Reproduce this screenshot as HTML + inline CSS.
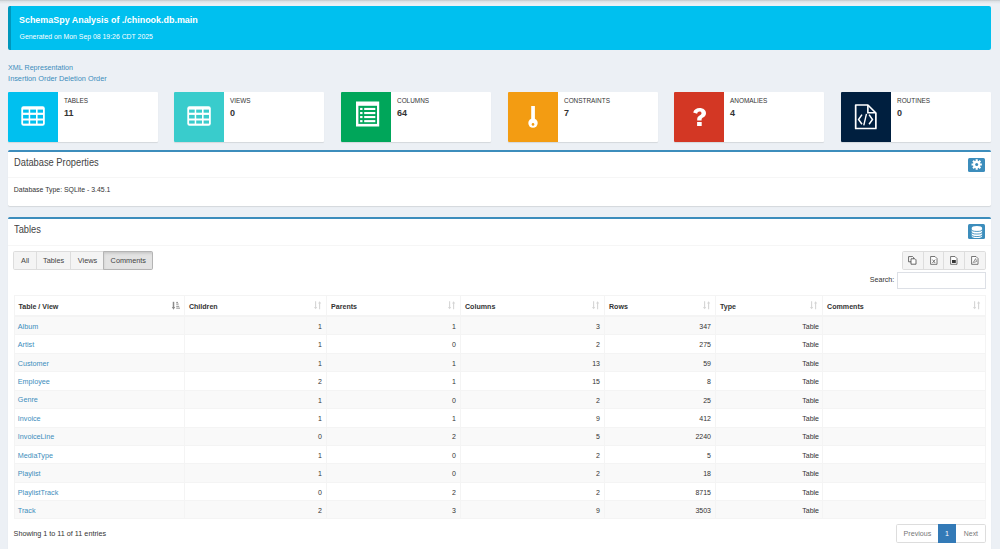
<!DOCTYPE html>
<html><head><meta charset="utf-8"><title>SchemaSpy</title>
<style>
html,body{margin:0;padding:0;width:1000px;height:549px;overflow:hidden;background:#ecf0f5;font-family:"Liberation Sans",sans-serif;}
.t{position:absolute;white-space:nowrap;}
</style></head><body>
<div style="position:absolute;left:0;top:0;width:1000px;height:4px;background:linear-gradient(#c2c6ca,#dde1e5 35%,#ecf0f5)"></div>
<div style="position:absolute;left:8px;top:6px;width:980px;height:44px;background:#00c0ef;border-left:3px solid #0097bc;border-radius:2px"></div>
<div class="t" style="left:19.20px;top:10.45px;font-size:9.655px;line-height:20px;color:#fff;font-weight:bold;transform:scaleX(0.9259);transform-origin:left center;">SchemaSpy Analysis of ./chinook.db.main</div>
<div class="t" style="left:19.60px;top:26.62px;font-size:6.88px;line-height:20px;color:#fff;font-weight:normal;">Generated on Mon Sep 08 19:26 CDT 2025</div>
<div class="t" style="left:8.10px;top:58.32px;font-size:7.15px;line-height:20px;color:#3c8dbc;font-weight:normal;">XML Representation</div>
<div class="t" style="left:8.10px;top:69.26px;font-size:7.34px;line-height:20px;color:#3c8dbc;font-weight:normal;">Insertion Order Deletion Order</div>
<div style="position:absolute;left:8.00px;top:92px;width:150px;height:50px;background:#fff;border-radius:1px;box-shadow:0 1px 1px rgba(0,0,0,0.1)"><div style="position:absolute;left:0;top:0;width:50px;height:50px;background:#00c0ef;border-radius:1px 0 0 1px"><svg style="position:absolute;left:13.3px;top:14.3px" width="25" height="21"><rect x="0.3" y="0.3" width="23.5" height="19.4" rx="2.2" fill="#fff"/><rect x="2.1" y="3.6" width="5.6" height="3.1" fill="#00c0ef"/><rect x="2.1" y="8.9" width="5.6" height="3.6" fill="#00c0ef"/><rect x="2.1" y="14.5" width="5.6" height="3.1" fill="#00c0ef"/><rect x="9.2" y="3.6" width="5.8" height="3.1" fill="#00c0ef"/><rect x="9.2" y="8.9" width="5.8" height="3.6" fill="#00c0ef"/><rect x="9.2" y="14.5" width="5.8" height="3.1" fill="#00c0ef"/><rect x="16.6" y="3.6" width="5.4" height="3.1" fill="#00c0ef"/><rect x="16.6" y="8.9" width="5.4" height="3.6" fill="#00c0ef"/><rect x="16.6" y="14.5" width="5.4" height="3.1" fill="#00c0ef"/></svg></div></div>
<div class="t" style="left:64.00px;top:90.58px;font-size:6.42px;line-height:20px;color:#333;font-weight:normal;">TABLES</div>
<div class="t" style="left:64.00px;top:103.18px;font-size:9.0px;line-height:20px;color:#333;font-weight:bold;">11</div>
<div style="position:absolute;left:174.00px;top:92px;width:150px;height:50px;background:#fff;border-radius:1px;box-shadow:0 1px 1px rgba(0,0,0,0.1)"><div style="position:absolute;left:0;top:0;width:50px;height:50px;background:#39cccc;border-radius:1px 0 0 1px"><svg style="position:absolute;left:13.3px;top:14.3px" width="25" height="21"><rect x="0.3" y="0.3" width="23.5" height="19.4" rx="2.2" fill="#fff"/><rect x="2.1" y="3.6" width="5.6" height="3.1" fill="#39cccc"/><rect x="2.1" y="8.9" width="5.6" height="3.6" fill="#39cccc"/><rect x="2.1" y="14.5" width="5.6" height="3.1" fill="#39cccc"/><rect x="9.2" y="3.6" width="5.8" height="3.1" fill="#39cccc"/><rect x="9.2" y="8.9" width="5.8" height="3.6" fill="#39cccc"/><rect x="9.2" y="14.5" width="5.8" height="3.1" fill="#39cccc"/><rect x="16.6" y="3.6" width="5.4" height="3.1" fill="#39cccc"/><rect x="16.6" y="8.9" width="5.4" height="3.6" fill="#39cccc"/><rect x="16.6" y="14.5" width="5.4" height="3.1" fill="#39cccc"/></svg></div></div>
<div class="t" style="left:230.00px;top:90.58px;font-size:6.42px;line-height:20px;color:#333;font-weight:normal;">VIEWS</div>
<div class="t" style="left:230.00px;top:103.18px;font-size:9.0px;line-height:20px;color:#333;font-weight:bold;">0</div>
<div style="position:absolute;left:341.00px;top:92px;width:150px;height:50px;background:#fff;border-radius:1px;box-shadow:0 1px 1px rgba(0,0,0,0.1)"><div style="position:absolute;left:0;top:0;width:50px;height:50px;background:#00a65a;border-radius:1px 0 0 1px"><svg style="position:absolute;left:14px;top:9px" width="26" height="27"><g transform="translate(0.7,0.5)"><rect x="0.3" y="0" width="23.2" height="25" fill="#fff"/><rect x="2.7" y="4.3" width="18.6" height="18.1" fill="#00a65a"/><rect x="4.4" y="6.4" width="2.4" height="2.1" fill="#fff"/><rect x="8.5" y="6.4" width="11.1" height="2.1" fill="#fff"/><rect x="4.4" y="10.5" width="2.4" height="2.1" fill="#fff"/><rect x="8.5" y="10.5" width="11.1" height="2.1" fill="#fff"/><rect x="4.4" y="14.5" width="2.4" height="2.1" fill="#fff"/><rect x="8.5" y="14.5" width="11.1" height="2.1" fill="#fff"/><rect x="4.4" y="18.6" width="2.4" height="2.1" fill="#fff"/><rect x="8.5" y="18.6" width="11.1" height="2.1" fill="#fff"/></g></svg></div></div>
<div class="t" style="left:397.00px;top:90.58px;font-size:6.42px;line-height:20px;color:#333;font-weight:normal;">COLUMNS</div>
<div class="t" style="left:397.00px;top:103.18px;font-size:9.0px;line-height:20px;color:#333;font-weight:bold;">64</div>
<div style="position:absolute;left:508.00px;top:92px;width:150px;height:50px;background:#fff;border-radius:1px;box-shadow:0 1px 1px rgba(0,0,0,0.1)"><div style="position:absolute;left:0;top:0;width:50px;height:50px;background:#f39c12;border-radius:1px 0 0 1px"><svg style="position:absolute;left:19.6px;top:14px" width="11" height="23"><rect x="3.2" y="0" width="3.7" height="15" fill="#fff"/><circle cx="5" cy="17.1" r="4.7" fill="#fff"/><circle cx="5" cy="18.4" r="1.3" fill="#f39c12"/></svg></div></div>
<div class="t" style="left:564.00px;top:90.58px;font-size:6.42px;line-height:20px;color:#333;font-weight:normal;">CONSTRAINTS</div>
<div class="t" style="left:564.00px;top:103.18px;font-size:9.0px;line-height:20px;color:#333;font-weight:bold;">7</div>
<div style="position:absolute;left:674.00px;top:92px;width:150px;height:50px;background:#fff;border-radius:1px;box-shadow:0 1px 1px rgba(0,0,0,0.1)"><div style="position:absolute;left:0;top:0;width:50px;height:50px;background:#d33724;border-radius:1px 0 0 1px"><svg style="position:absolute;left:19.2px;top:15.9px" width="15" height="19"><path d="M0.2 4.6 C0.9 1.5 3.5 0 6.6 0 C10.3 0 13 2.1 13 5.2 C13 7.6 11.5 8.7 10 9.6 C9 10.2 8.6 10.7 8.6 11.7 L8.6 12.6 L4.2 12.6 L4.2 11.2 C4.2 9.3 5.1 8.3 6.6 7.4 C7.7 6.7 8.5 6.2 8.5 5.2 C8.5 4.1 7.7 3.5 6.6 3.5 C5.3 3.5 4.5 4.3 4.1 5.7 Z" fill="#fff"/><rect x="4.1" y="14" width="4.6" height="4" fill="#fff"/></svg></div></div>
<div class="t" style="left:730.00px;top:90.58px;font-size:6.42px;line-height:20px;color:#333;font-weight:normal;">ANOMALIES</div>
<div class="t" style="left:730.00px;top:103.18px;font-size:9.0px;line-height:20px;color:#333;font-weight:bold;">4</div>
<div style="position:absolute;left:841.00px;top:92px;width:150px;height:50px;background:#fff;border-radius:1px;box-shadow:0 1px 1px rgba(0,0,0,0.1)"><div style="position:absolute;left:0;top:0;width:50px;height:50px;background:#001f3f;border-radius:1px 0 0 1px"><svg style="position:absolute;left:0;top:0" width="50" height="50"><g transform="translate(-841.33,-92)"><path d="M856 105 H868.2 L876.2 113 V128.5 H856 Z" fill="none" stroke="#fff" stroke-width="1.7" stroke-linejoin="round"/><path d="M868.2 105 V112.8 H876.2" fill="none" stroke="#fff" stroke-width="1.6"/><path d="M862.3 114.6 L858.9 119.5 L862.3 124.2" fill="none" stroke="#fff" stroke-width="1.5"/><path d="M869.4 114.6 L872.8 119.5 L869.4 124.2" fill="none" stroke="#fff" stroke-width="1.5"/><path d="M866.8 113.8 L864.1 125.4" fill="none" stroke="#fff" stroke-width="1.4"/></g></svg></div></div>
<div class="t" style="left:897.00px;top:90.58px;font-size:6.42px;line-height:20px;color:#333;font-weight:normal;">ROUTINES</div>
<div class="t" style="left:897.00px;top:103.18px;font-size:9.0px;line-height:20px;color:#333;font-weight:bold;">0</div>
<div style="position:absolute;left:8px;top:150.3px;width:983px;height:55.7px;background:#fff;border-top:2px solid #3c8dbc;box-sizing:border-box;border-radius:1.7px;box-shadow:0 1px 1px rgba(0,0,0,0.1)"></div>
<div class="t" style="left:14.20px;top:153.06px;font-size:10.23px;line-height:20px;color:#444;font-weight:normal;transform:scaleX(0.9091);transform-origin:left center;">Database Properties</div>
<div style="position:absolute;left:968px;top:157.8px;width:17px;height:14.2px;background:#3c8dbc;border-radius:1.5px"></div>
<svg style="position:absolute;left:0;top:0" width="1000" height="549"><polygon points="975.29,161.08 975.59,160.92 975.66,159.35 977.74,159.35 977.81,160.92 978.11,161.08 978.13,161.09 978.45,161.18 979.60,160.12 981.08,161.60 980.02,162.75 980.11,163.07 980.12,163.09 980.28,163.39 981.85,163.46 981.85,165.54 980.28,165.61 980.12,165.91 980.11,165.93 980.02,166.25 981.08,167.40 979.60,168.88 978.45,167.82 978.13,167.91 978.11,167.92 977.81,168.08 977.74,169.65 975.66,169.65 975.59,168.08 975.29,167.92 975.27,167.91 974.95,167.82 973.80,168.88 972.32,167.40 973.38,166.25 973.29,165.93 973.28,165.91 973.12,165.61 971.55,165.54 971.55,163.46 973.12,163.39 973.28,163.09 973.29,163.07 973.38,162.75 972.32,161.60 973.80,160.12 974.95,161.18 975.27,161.09" fill="#fff"/><circle cx="976.7" cy="164.5" r="1.5" fill="#3c8dbc"/></svg>
<div style="position:absolute;left:8px;top:177px;width:983px;height:0.6px;background:#f6f6f6"></div>
<div class="t" style="left:13.80px;top:179.60px;font-size:6.92px;line-height:20px;color:#333;font-weight:normal;">Database Type: SQLite - 3.45.1</div>
<div style="position:absolute;left:8px;top:217px;width:983px;height:400px;background:#fff;border-top:2px solid #3c8dbc;box-sizing:border-box;border-radius:1.7px;box-shadow:0 1px 1px rgba(0,0,0,0.1)"></div>
<div class="t" style="left:14.20px;top:220.06px;font-size:10.23px;line-height:20px;color:#444;font-weight:normal;transform:scaleX(0.9091);transform-origin:left center;">Tables</div>
<div style="position:absolute;left:968px;top:224.3px;width:17px;height:14.9px;background:#3c8dbc;border-radius:1.5px"></div>
<svg style="position:absolute;left:0;top:0" width="1000" height="549"><path d="M971.7 228 A5.2 2.1 0 0 1 982.1 228 V236 A5.2 2.1 0 0 1 971.7 236 Z" fill="#fff"/><path d="M971.5 229.4 A5.3 2.0 0 0 0 982.3 229.4" fill="none" stroke="#3c8dbc" stroke-width="0.9"/><path d="M971.5 232.0 A5.3 2.0 0 0 0 982.3 232.0" fill="none" stroke="#3c8dbc" stroke-width="0.9"/><path d="M971.5 234.5 A5.3 2.0 0 0 0 982.3 234.5" fill="none" stroke="#3c8dbc" stroke-width="0.9"/></svg>
<div style="position:absolute;left:8px;top:245px;width:983px;height:0.6px;background:#f6f6f6"></div>
<div style="position:absolute;left:13.3px;top:251.2px;width:139.7px;height:18.8px;box-sizing:border-box;border:0.6px solid #ddd;border-radius:1.7px;background:#f4f4f4;overflow:hidden"><div style="position:absolute;left:90.1px;top:0;width:50px;height:100%;background:#e3e3e3;box-shadow:inset 0 1.5px 2.5px rgba(0,0,0,0.13)"></div></div>
<div style="position:absolute;left:36.20px;top:251.2px;width:0.6px;height:18.8px;background:#ddd"></div>
<div style="position:absolute;left:70.30px;top:251.2px;width:0.6px;height:18.8px;background:#ddd"></div>
<div style="position:absolute;left:103.10px;top:251.2px;width:0.6px;height:18.8px;background:#ddd"></div>
<div style="position:absolute;left:103.1px;top:251.2px;width:49.9px;height:18.8px;box-sizing:border-box;border:0.8px solid #b4b4b4;border-radius:0 1.7px 1.7px 0"></div>
<div class="t" style="left:21.00px;top:251.16px;font-size:7.33px;line-height:20px;color:#444;font-weight:normal;">All</div>
<div class="t" style="left:43.00px;top:251.16px;font-size:7.33px;line-height:20px;color:#444;font-weight:normal;">Tables</div>
<div class="t" style="left:77.80px;top:251.16px;font-size:7.33px;line-height:20px;color:#444;font-weight:normal;">Views</div>
<div class="t" style="left:110.60px;top:251.16px;font-size:7.33px;line-height:20px;color:#444;font-weight:normal;">Comments</div>
<div style="position:absolute;left:901.6px;top:251.4px;width:84px;height:18.4px;box-sizing:border-box;border:0.6px solid #ddd;border-radius:1.7px;background:#f4f4f4"></div>
<div style="position:absolute;left:923.20px;top:251.4px;width:0.6px;height:18.4px;background:#ddd"></div>
<div style="position:absolute;left:943.30px;top:251.4px;width:0.6px;height:18.4px;background:#ddd"></div>
<div style="position:absolute;left:964.20px;top:251.4px;width:0.6px;height:18.4px;background:#ddd"></div>
<svg style="position:absolute;left:908.20px;top:256.4px" width="9" height="9"><path d="M0.6 0.6 H4.6 L5.6 1.6 V5.8 H0.6 Z" fill="#fff" stroke="#444" stroke-width="0.8"/><path d="M3 2.8 H7 L8 3.8 V8.2 H3 Z" fill="#fff" stroke="#444" stroke-width="0.8"/></svg>
<svg style="position:absolute;left:929.60px;top:256.4px" width="9" height="9"><path d="M0.6 0.5 H5 L7 2.5 V8.3 H0.6 Z" fill="#fff" stroke="#555" stroke-width="0.8"/><path d="M2.4 3.6 L5.2 7 M5.2 3.6 L2.4 7" stroke="#555" stroke-width="0.8"/></svg>
<svg style="position:absolute;left:950.40px;top:256.4px" width="9" height="9"><path d="M0.6 0.5 H5 L7 2.5 V8.3 H0.6 Z" fill="#fff" stroke="#555" stroke-width="0.8"/><rect x="2" y="4" width="3.8" height="3" fill="#333"/></svg>
<svg style="position:absolute;left:970.80px;top:256.4px" width="9" height="9"><path d="M0.6 0.5 H5 L7 2.5 V8.3 H0.6 Z" fill="#fff" stroke="#555" stroke-width="0.8"/><path d="M1.8 7.2 L4.6 2.6 L5.6 5.6 L2.8 6.4" fill="none" stroke="#666" stroke-width="0.7"/></svg>
<div class="t" style="right:105.80px;top:269.55px;font-size:7.08px;line-height:20px;color:#333;font-weight:normal;">Search:</div>
<div style="position:absolute;left:897.3px;top:272.2px;width:88.3px;height:16.8px;box-sizing:border-box;border:0.7px solid #dde0e6;background:#fff"></div>
<div style="position:absolute;left:13.8px;top:316.00px;width:971.8px;height:18.44px;background:#f9f9f9;border-top:0.6px solid #f4f4f4;box-sizing:border-box"></div>
<div style="position:absolute;left:13.8px;top:334.44px;width:971.8px;height:18.44px;background:#fff;border-top:0.6px solid #f4f4f4;box-sizing:border-box"></div>
<div style="position:absolute;left:13.8px;top:352.87px;width:971.8px;height:18.44px;background:#f9f9f9;border-top:0.6px solid #f4f4f4;box-sizing:border-box"></div>
<div style="position:absolute;left:13.8px;top:371.31px;width:971.8px;height:18.44px;background:#fff;border-top:0.6px solid #f4f4f4;box-sizing:border-box"></div>
<div style="position:absolute;left:13.8px;top:389.74px;width:971.8px;height:18.44px;background:#f9f9f9;border-top:0.6px solid #f4f4f4;box-sizing:border-box"></div>
<div style="position:absolute;left:13.8px;top:408.18px;width:971.8px;height:18.44px;background:#fff;border-top:0.6px solid #f4f4f4;box-sizing:border-box"></div>
<div style="position:absolute;left:13.8px;top:426.62px;width:971.8px;height:18.44px;background:#f9f9f9;border-top:0.6px solid #f4f4f4;box-sizing:border-box"></div>
<div style="position:absolute;left:13.8px;top:445.05px;width:971.8px;height:18.44px;background:#fff;border-top:0.6px solid #f4f4f4;box-sizing:border-box"></div>
<div style="position:absolute;left:13.8px;top:463.49px;width:971.8px;height:18.44px;background:#f9f9f9;border-top:0.6px solid #f4f4f4;box-sizing:border-box"></div>
<div style="position:absolute;left:13.8px;top:481.92px;width:971.8px;height:18.44px;background:#fff;border-top:0.6px solid #f4f4f4;box-sizing:border-box"></div>
<div style="position:absolute;left:13.8px;top:500.36px;width:971.8px;height:18.44px;background:#f9f9f9;border-top:0.6px solid #f4f4f4;box-sizing:border-box"></div>
<div style="position:absolute;left:13.8px;top:295.3px;width:971.8px;height:223.50px;box-sizing:border-box;border:0.6px solid #f4f4f4"></div>
<div style="position:absolute;left:13.8px;top:314.90px;width:971.8px;height:1.1px;background:#f4f4f4"></div>
<div style="position:absolute;left:184.00px;top:295.3px;width:0.6px;height:223.50px;background:#f4f4f4"></div>
<div style="position:absolute;left:326.10px;top:295.3px;width:0.6px;height:223.50px;background:#f4f4f4"></div>
<div style="position:absolute;left:460.10px;top:295.3px;width:0.6px;height:223.50px;background:#f4f4f4"></div>
<div style="position:absolute;left:604.10px;top:295.3px;width:0.6px;height:223.50px;background:#f4f4f4"></div>
<div style="position:absolute;left:715.10px;top:295.3px;width:0.6px;height:223.50px;background:#f4f4f4"></div>
<div style="position:absolute;left:822.20px;top:295.3px;width:0.6px;height:223.50px;background:#f4f4f4"></div>
<div class="t" style="left:18.40px;top:296.74px;font-size:7.1px;line-height:20px;color:#333;font-weight:bold;">Table / View</div>
<div class="t" style="left:188.90px;top:296.74px;font-size:7.1px;line-height:20px;color:#333;font-weight:bold;">Children</div>
<div class="t" style="left:331.00px;top:296.74px;font-size:7.1px;line-height:20px;color:#333;font-weight:bold;">Parents</div>
<div class="t" style="left:465.00px;top:296.74px;font-size:7.1px;line-height:20px;color:#333;font-weight:bold;">Columns</div>
<div class="t" style="left:609.00px;top:296.74px;font-size:7.1px;line-height:20px;color:#333;font-weight:bold;">Rows</div>
<div class="t" style="left:720.00px;top:296.74px;font-size:7.1px;line-height:20px;color:#333;font-weight:bold;">Type</div>
<div class="t" style="left:827.10px;top:296.74px;font-size:7.1px;line-height:20px;color:#333;font-weight:bold;">Comments</div>
<svg style="position:absolute;left:314.10px;top:301.2px" width="8" height="9"><path d="M1.6 0.3 V7.2" stroke="#d5d5d5" stroke-width="1.1"/><path d="M0 6 L1.6 8.2 L3.2 6 Z" fill="#d5d5d5"/><path d="M5.6 1.8 V8.3" stroke="#d5d5d5" stroke-width="1.1"/><path d="M4 2.4 L5.6 0.2 L7.2 2.4 Z" fill="#d5d5d5"/></svg>
<svg style="position:absolute;left:448.10px;top:301.2px" width="8" height="9"><path d="M1.6 0.3 V7.2" stroke="#d5d5d5" stroke-width="1.1"/><path d="M0 6 L1.6 8.2 L3.2 6 Z" fill="#d5d5d5"/><path d="M5.6 1.8 V8.3" stroke="#d5d5d5" stroke-width="1.1"/><path d="M4 2.4 L5.6 0.2 L7.2 2.4 Z" fill="#d5d5d5"/></svg>
<svg style="position:absolute;left:592.10px;top:301.2px" width="8" height="9"><path d="M1.6 0.3 V7.2" stroke="#d5d5d5" stroke-width="1.1"/><path d="M0 6 L1.6 8.2 L3.2 6 Z" fill="#d5d5d5"/><path d="M5.6 1.8 V8.3" stroke="#d5d5d5" stroke-width="1.1"/><path d="M4 2.4 L5.6 0.2 L7.2 2.4 Z" fill="#d5d5d5"/></svg>
<svg style="position:absolute;left:703.10px;top:301.2px" width="8" height="9"><path d="M1.6 0.3 V7.2" stroke="#d5d5d5" stroke-width="1.1"/><path d="M0 6 L1.6 8.2 L3.2 6 Z" fill="#d5d5d5"/><path d="M5.6 1.8 V8.3" stroke="#d5d5d5" stroke-width="1.1"/><path d="M4 2.4 L5.6 0.2 L7.2 2.4 Z" fill="#d5d5d5"/></svg>
<svg style="position:absolute;left:810.20px;top:301.2px" width="8" height="9"><path d="M1.6 0.3 V7.2" stroke="#d5d5d5" stroke-width="1.1"/><path d="M0 6 L1.6 8.2 L3.2 6 Z" fill="#d5d5d5"/><path d="M5.6 1.8 V8.3" stroke="#d5d5d5" stroke-width="1.1"/><path d="M4 2.4 L5.6 0.2 L7.2 2.4 Z" fill="#d5d5d5"/></svg>
<svg style="position:absolute;left:973.30px;top:301.2px" width="8" height="9"><path d="M1.6 0.3 V7.2" stroke="#d5d5d5" stroke-width="1.1"/><path d="M0 6 L1.6 8.2 L3.2 6 Z" fill="#d5d5d5"/><path d="M5.6 1.8 V8.3" stroke="#d5d5d5" stroke-width="1.1"/><path d="M4 2.4 L5.6 0.2 L7.2 2.4 Z" fill="#d5d5d5"/></svg>
<svg style="position:absolute;left:0;top:0" width="1000" height="549"><path d="M173.5 301.8 V308" stroke="#8a8a8a" stroke-width="1.5"/><path d="M171.8 307 L173.5 309.8 L175.2 307 Z" fill="#8a8a8a"/><rect x="176.2" y="301.9" width="1.8" height="1.1" fill="#999"/><rect x="176.2" y="303.5" width="2.4" height="1.2" fill="#999"/><rect x="176.2" y="305.8" width="3.0" height="1.1" fill="#999"/><rect x="176.2" y="307.6" width="3.8" height="1.1" fill="#999"/></svg>
<div class="t" style="left:17.80px;top:316.72px;font-size:7.2px;line-height:20px;color:#3c8dbc;font-weight:normal;">Album</div>
<div class="t" style="right:678.00px;top:316.79px;font-size:7.0px;line-height:20px;color:#333;font-weight:normal;">1</div>
<div class="t" style="right:544.00px;top:316.79px;font-size:7.0px;line-height:20px;color:#333;font-weight:normal;">1</div>
<div class="t" style="right:400.00px;top:316.79px;font-size:7.0px;line-height:20px;color:#333;font-weight:normal;">3</div>
<div class="t" style="right:289.00px;top:316.79px;font-size:7.0px;line-height:20px;color:#333;font-weight:normal;">347</div>
<div class="t" style="right:181.00px;top:316.79px;font-size:7.0px;line-height:20px;color:#333;font-weight:normal;">Table</div>
<div class="t" style="left:17.80px;top:335.16px;font-size:7.2px;line-height:20px;color:#3c8dbc;font-weight:normal;">Artist</div>
<div class="t" style="right:678.00px;top:335.23px;font-size:7.0px;line-height:20px;color:#333;font-weight:normal;">1</div>
<div class="t" style="right:544.00px;top:335.23px;font-size:7.0px;line-height:20px;color:#333;font-weight:normal;">0</div>
<div class="t" style="right:400.00px;top:335.23px;font-size:7.0px;line-height:20px;color:#333;font-weight:normal;">2</div>
<div class="t" style="right:289.00px;top:335.23px;font-size:7.0px;line-height:20px;color:#333;font-weight:normal;">275</div>
<div class="t" style="right:181.00px;top:335.23px;font-size:7.0px;line-height:20px;color:#333;font-weight:normal;">Table</div>
<div class="t" style="left:17.80px;top:353.60px;font-size:7.2px;line-height:20px;color:#3c8dbc;font-weight:normal;">Customer</div>
<div class="t" style="right:678.00px;top:353.66px;font-size:7.0px;line-height:20px;color:#333;font-weight:normal;">1</div>
<div class="t" style="right:544.00px;top:353.66px;font-size:7.0px;line-height:20px;color:#333;font-weight:normal;">1</div>
<div class="t" style="right:400.00px;top:353.66px;font-size:7.0px;line-height:20px;color:#333;font-weight:normal;">13</div>
<div class="t" style="right:289.00px;top:353.66px;font-size:7.0px;line-height:20px;color:#333;font-weight:normal;">59</div>
<div class="t" style="right:181.00px;top:353.66px;font-size:7.0px;line-height:20px;color:#333;font-weight:normal;">Table</div>
<div class="t" style="left:17.80px;top:372.03px;font-size:7.2px;line-height:20px;color:#3c8dbc;font-weight:normal;">Employee</div>
<div class="t" style="right:678.00px;top:372.10px;font-size:7.0px;line-height:20px;color:#333;font-weight:normal;">2</div>
<div class="t" style="right:544.00px;top:372.10px;font-size:7.0px;line-height:20px;color:#333;font-weight:normal;">1</div>
<div class="t" style="right:400.00px;top:372.10px;font-size:7.0px;line-height:20px;color:#333;font-weight:normal;">15</div>
<div class="t" style="right:289.00px;top:372.10px;font-size:7.0px;line-height:20px;color:#333;font-weight:normal;">8</div>
<div class="t" style="right:181.00px;top:372.10px;font-size:7.0px;line-height:20px;color:#333;font-weight:normal;">Table</div>
<div class="t" style="left:17.80px;top:390.47px;font-size:7.2px;line-height:20px;color:#3c8dbc;font-weight:normal;">Genre</div>
<div class="t" style="right:678.00px;top:390.54px;font-size:7.0px;line-height:20px;color:#333;font-weight:normal;">1</div>
<div class="t" style="right:544.00px;top:390.54px;font-size:7.0px;line-height:20px;color:#333;font-weight:normal;">0</div>
<div class="t" style="right:400.00px;top:390.54px;font-size:7.0px;line-height:20px;color:#333;font-weight:normal;">2</div>
<div class="t" style="right:289.00px;top:390.54px;font-size:7.0px;line-height:20px;color:#333;font-weight:normal;">25</div>
<div class="t" style="right:181.00px;top:390.54px;font-size:7.0px;line-height:20px;color:#333;font-weight:normal;">Table</div>
<div class="t" style="left:17.80px;top:408.90px;font-size:7.2px;line-height:20px;color:#3c8dbc;font-weight:normal;">Invoice</div>
<div class="t" style="right:678.00px;top:408.97px;font-size:7.0px;line-height:20px;color:#333;font-weight:normal;">1</div>
<div class="t" style="right:544.00px;top:408.97px;font-size:7.0px;line-height:20px;color:#333;font-weight:normal;">1</div>
<div class="t" style="right:400.00px;top:408.97px;font-size:7.0px;line-height:20px;color:#333;font-weight:normal;">9</div>
<div class="t" style="right:289.00px;top:408.97px;font-size:7.0px;line-height:20px;color:#333;font-weight:normal;">412</div>
<div class="t" style="right:181.00px;top:408.97px;font-size:7.0px;line-height:20px;color:#333;font-weight:normal;">Table</div>
<div class="t" style="left:17.80px;top:427.34px;font-size:7.2px;line-height:20px;color:#3c8dbc;font-weight:normal;">InvoiceLine</div>
<div class="t" style="right:678.00px;top:427.41px;font-size:7.0px;line-height:20px;color:#333;font-weight:normal;">0</div>
<div class="t" style="right:544.00px;top:427.41px;font-size:7.0px;line-height:20px;color:#333;font-weight:normal;">2</div>
<div class="t" style="right:400.00px;top:427.41px;font-size:7.0px;line-height:20px;color:#333;font-weight:normal;">5</div>
<div class="t" style="right:289.00px;top:427.41px;font-size:7.0px;line-height:20px;color:#333;font-weight:normal;">2240</div>
<div class="t" style="right:181.00px;top:427.41px;font-size:7.0px;line-height:20px;color:#333;font-weight:normal;">Table</div>
<div class="t" style="left:17.80px;top:445.78px;font-size:7.2px;line-height:20px;color:#3c8dbc;font-weight:normal;">MediaType</div>
<div class="t" style="right:678.00px;top:445.84px;font-size:7.0px;line-height:20px;color:#333;font-weight:normal;">1</div>
<div class="t" style="right:544.00px;top:445.84px;font-size:7.0px;line-height:20px;color:#333;font-weight:normal;">0</div>
<div class="t" style="right:400.00px;top:445.84px;font-size:7.0px;line-height:20px;color:#333;font-weight:normal;">2</div>
<div class="t" style="right:289.00px;top:445.84px;font-size:7.0px;line-height:20px;color:#333;font-weight:normal;">5</div>
<div class="t" style="right:181.00px;top:445.84px;font-size:7.0px;line-height:20px;color:#333;font-weight:normal;">Table</div>
<div class="t" style="left:17.80px;top:464.21px;font-size:7.2px;line-height:20px;color:#3c8dbc;font-weight:normal;">Playlist</div>
<div class="t" style="right:678.00px;top:464.28px;font-size:7.0px;line-height:20px;color:#333;font-weight:normal;">1</div>
<div class="t" style="right:544.00px;top:464.28px;font-size:7.0px;line-height:20px;color:#333;font-weight:normal;">0</div>
<div class="t" style="right:400.00px;top:464.28px;font-size:7.0px;line-height:20px;color:#333;font-weight:normal;">2</div>
<div class="t" style="right:289.00px;top:464.28px;font-size:7.0px;line-height:20px;color:#333;font-weight:normal;">18</div>
<div class="t" style="right:181.00px;top:464.28px;font-size:7.0px;line-height:20px;color:#333;font-weight:normal;">Table</div>
<div class="t" style="left:17.80px;top:482.65px;font-size:7.2px;line-height:20px;color:#3c8dbc;font-weight:normal;">PlaylistTrack</div>
<div class="t" style="right:678.00px;top:482.72px;font-size:7.0px;line-height:20px;color:#333;font-weight:normal;">0</div>
<div class="t" style="right:544.00px;top:482.72px;font-size:7.0px;line-height:20px;color:#333;font-weight:normal;">2</div>
<div class="t" style="right:400.00px;top:482.72px;font-size:7.0px;line-height:20px;color:#333;font-weight:normal;">2</div>
<div class="t" style="right:289.00px;top:482.72px;font-size:7.0px;line-height:20px;color:#333;font-weight:normal;">8715</div>
<div class="t" style="right:181.00px;top:482.72px;font-size:7.0px;line-height:20px;color:#333;font-weight:normal;">Table</div>
<div class="t" style="left:17.80px;top:501.08px;font-size:7.2px;line-height:20px;color:#3c8dbc;font-weight:normal;">Track</div>
<div class="t" style="right:678.00px;top:501.15px;font-size:7.0px;line-height:20px;color:#333;font-weight:normal;">2</div>
<div class="t" style="right:544.00px;top:501.15px;font-size:7.0px;line-height:20px;color:#333;font-weight:normal;">3</div>
<div class="t" style="right:400.00px;top:501.15px;font-size:7.0px;line-height:20px;color:#333;font-weight:normal;">9</div>
<div class="t" style="right:289.00px;top:501.15px;font-size:7.0px;line-height:20px;color:#333;font-weight:normal;">3503</div>
<div class="t" style="right:181.00px;top:501.15px;font-size:7.0px;line-height:20px;color:#333;font-weight:normal;">Table</div>
<div class="t" style="left:13.60px;top:523.80px;font-size:7.22px;line-height:20px;color:#333;font-weight:normal;">Showing 1 to 11 of 11 entries</div>
<div style="position:absolute;left:896.4px;top:524px;width:89.2px;height:18.8px;box-sizing:border-box;border:0.6px solid #ddd;border-radius:1.7px;background:#fff"></div>
<div style="position:absolute;left:938.2px;top:524px;width:17.8px;height:18.8px;background:#337ab7"></div>
<div class="t" style="left:903.60px;top:523.52px;font-size:7.15px;line-height:20px;color:#777;font-weight:normal;">Previous</div>
<div class="t" style="left:747.10px;width:400px;text-align:center;top:523.52px;font-size:7.15px;line-height:20px;color:#fff;font-weight:normal;">1</div>
<div class="t" style="left:963.80px;top:523.61px;font-size:6.91px;line-height:20px;color:#777;font-weight:normal;">Next</div>
</body></html>
